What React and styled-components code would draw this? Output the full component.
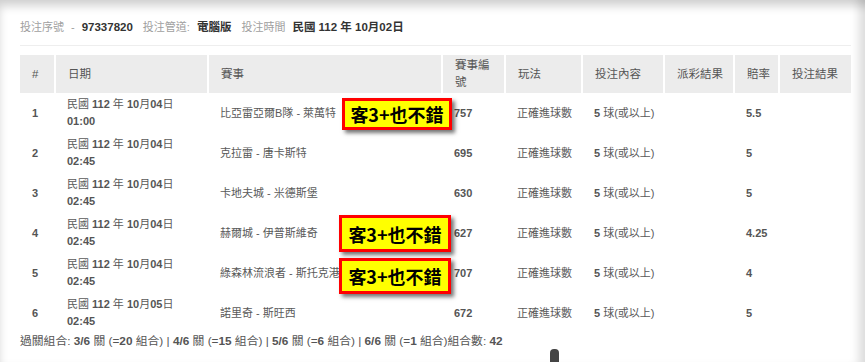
import React from "react";
import styled, { createGlobalStyle } from "styled-components";

const GlobalStyle = createGlobalStyle`
  html, body {
    margin: 0;
    padding: 0;
    background: #fff;
  }
  body {
    font-family: "Liberation Sans", "Noto Sans CJK TC", sans-serif;
  }
`;

const Frame = styled.div`
  position: relative;
  width: 865px;
  height: 362px;
  overflow: hidden;
  box-sizing: border-box;
  padding: 19px 15px 0 20px;
  background: #fff;
  box-shadow: inset 5px 12px 10px -6px rgba(0, 0, 0, 0.18),
    inset -12px 0 10px -6px rgba(0, 0, 0, 0.14);
`;

const InfoBar = styled.div`
  display: flex;
  align-items: center;
  gap: 7px;
  font-size: 11px;
  line-height: 17px;
  padding-bottom: 9px;
  border-bottom: 1px solid #eee;
  margin-right: -1px;
`;

const Label = styled.span`
  color: #a0a0a0;
`;

const Value = styled.span`
  color: #333;
  font-weight: bold;
  font-size: 11.5px;
  margin-right: 3px;
`;

const Table = styled.table`
  margin-top: 9px;
  width: 831px;
  border-collapse: collapse;
  table-layout: fixed;
  font-size: 11px;
  color: #595959;
`;

const Th = styled.th`
  background: #ececec;
  border-left: 2px solid #fff;
  height: 38px;
  padding: 0 8px 0 12px;
  text-align: left;
  font-weight: normal;
  font-size: 11.5px;
  line-height: 17px;
  color: #555;
  &:first-child {
    border-left: none;
  }
`;

const Td = styled.td`
  height: 40px;
  padding: 0 0 0 12px;
  line-height: 17px;
  vertical-align: middle;
  white-space: nowrap;
`;

const Num = styled.b`
  font-weight: bold;
  color: #555;
`;

const Footer = styled.div`
  margin-top: 0;
  font-size: 11.8px;
  line-height: 17px;
  color: #555;
`;

const Badge = styled.div`
  position: absolute;
  left: ${({ $x }) => $x}px;
  top: ${({ $y }) => $y}px;
  width: ${({ $w }) => $w}px;
  height: ${({ $h }) => $h}px;
  box-sizing: border-box;
  display: flex;
  align-items: center;
  justify-content: center;
  background: #ffff00;
  border: 3px solid #ff0000;
  box-shadow: 3px 3px 4px rgba(0, 0, 0, 0.55);
  font-family: "Noto Sans CJK TC", "Liberation Sans", sans-serif;
  font-size: 18px;
  font-weight: bold;
  color: #000;
`;

const Grip = styled.div`
  position: absolute;
  left: 550px;
  top: 349px;
  width: 9px;
  height: 16px;
  border-radius: 4px 4px 0 0;
  background: #444;
`;

const Rich = ({ text }) =>
  text
    .split(/(\d[\d.:/]*)/)
    .map((part, i) =>
      /^\d/.test(part) ? <Num key={i}>{part}</Num> : <React.Fragment key={i}>{part}</React.Fragment>
    );

const columns = [
  { title: "#", width: 35 },
  { title: "日期", width: 153 },
  { title: "賽事", width: 234 },
  { title: "賽事編號", width: 63 },
  { title: "玩法", width: 77 },
  { title: "投注內容", width: 82 },
  { title: "派彩結果", width: 70 },
  { title: "賠率", width: 45 },
  { title: "投注結果", width: 72 },
];

const rows = [
  { date: "民國 112 年 10月04日", time: "01:00", match: "比亞雷亞爾B隊 - 萊萬特", code: "757", odds: "5.5" },
  { date: "民國 112 年 10月04日", time: "02:45", match: "克拉雷 - 唐卡斯特", code: "695", odds: "5" },
  { date: "民國 112 年 10月04日", time: "02:45", match: "卡地夫城 - 米德斯堡", code: "630", odds: "5" },
  { date: "民國 112 年 10月04日", time: "02:45", match: "赫爾城 - 伊普斯維奇", code: "627", odds: "4.25" },
  { date: "民國 112 年 10月04日", time: "02:45", match: "綠森林流浪者 - 斯托克港", code: "707", odds: "4" },
  { date: "民國 112 年 10月05日", time: "02:45", match: "諾里奇 - 斯旺西", code: "672", odds: "5" },
];

const badges = [
  { x: 342, y: 98, w: 110, h: 32 },
  { x: 339, y: 215, w: 112, h: 37 },
  { x: 339, y: 258, w: 112, h: 36 },
];

export default function App() {
  return (
    <>
      <GlobalStyle />
      <Frame>
        <InfoBar>
          <Label>投注序號</Label>
          <Label>-</Label>
          <Value>97337820</Value>
          <Label>投注管道:</Label>
          <Value>電腦版</Value>
          <Label>投注時間</Label>
          <Value>民國 112 年 10月02日</Value>
        </InfoBar>
        <Table>
          <colgroup>
            {columns.map((c) => (
              <col key={c.title} style={{ width: c.width }} />
            ))}
          </colgroup>
          <thead>
            <tr>
              {columns.map((c) => (
                <Th key={c.title}>{c.title}</Th>
              ))}
            </tr>
          </thead>
          <tbody>
            {rows.map((r, i) => (
              <tr key={i}>
                <Td>
                  <Num>{i + 1}</Num>
                </Td>
                <Td>
                  <Rich text={r.date} />
                  <br />
                  <Num>{r.time}</Num>
                </Td>
                <Td>{r.match}</Td>
                <Td>
                  <Num>{r.code}</Num>
                </Td>
                <Td>正確進球數</Td>
                <Td>
                  <Num>5</Num> 球(或以上)
                </Td>
                <Td />
                <Td>
                  <Num>{r.odds}</Num>
                </Td>
                <Td />
              </tr>
            ))}
          </tbody>
        </Table>
        <Footer>
          <Rich text="過關組合: 3/6 關 (=20 組合) | 4/6 關 (=15 組合) | 5/6 關 (=6 組合) | 6/6 關 (=1 組合)組合數: 42" />
        </Footer>
        {badges.map((b, i) => (
          <Badge key={i} $x={b.x} $y={b.y} $w={b.w} $h={b.h}>
            客3+也不錯
          </Badge>
        ))}
        <Grip />
      </Frame>
    </>
  );
}
